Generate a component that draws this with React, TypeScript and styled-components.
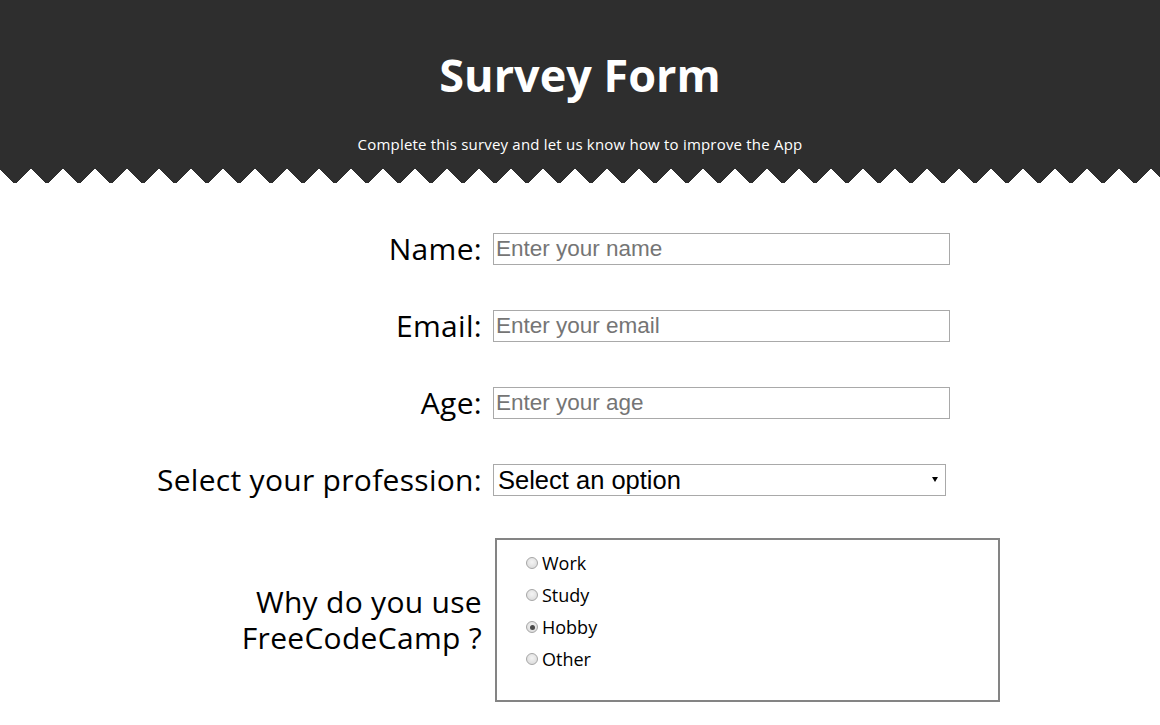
import React from "react";
import styled, { createGlobalStyle } from "styled-components";

const Global = createGlobalStyle`
  html, body { margin: 0; padding: 0; background: #fff; }
  body { font-family: "Open Sans", "DejaVu Sans", sans-serif; color: #000; }
  * { box-sizing: border-box; }
`;

const DARK = "#2e2e2e";
const LABEL_FONT = `"Open Sans", "DejaVu Sans", sans-serif`;

const Header = styled.header`
  background: ${DARK};
  height: 168px;
  display: flex;
  flex-direction: column;
  align-items: center;
  color: #fff;
  padding-top: 47px;
`;

const Title = styled.h1`
  margin: 0;
  font-family: ${LABEL_FONT};
  font-size: 45px;
  font-weight: 700;
  line-height: 56px;
`;

const Subtitle = styled.p`
  margin: 31px 0 0;
  font-family: ${LABEL_FONT};
  font-size: 15px;
  letter-spacing: 0.2px;
  line-height: 20px;
`;

const Zigzag = styled.div`
  height: 15px;
  background: conic-gradient(from -45deg at 50% 100%, ${DARK} 90deg, transparent 0) -1px 0 / 32px 16px repeat-x;
`;

const Form = styled.form`
  display: grid;
  grid-template-columns: 482px 1fr;
  column-gap: 11px;
  padding-top: 50px;
`;

const Row = styled.div`
  display: contents;
`;

const Label = styled.label<{ $mb: number }>`
  grid-column: 1;
  text-align: right;
  align-self: center;
  font-family: ${LABEL_FONT};
  font-size: 30px;
  letter-spacing: 0.3px;
  line-height: 32px;
  margin-bottom: ${(p) => p.$mb}px;
`;

const TallLabel = styled(Label)`
  line-height: 36px;
`;

const Input = styled.input<{ $mb: number }>`
  grid-column: 2;
  width: 457px;
  height: 32px;
  border: 1px solid #a9a9a9;
  padding: 0 2px;
  font-family: "Liberation Sans", Arial, sans-serif;
  font-size: 22.5px;
  margin-bottom: ${(p) => p.$mb}px;
  &::placeholder { color: #757575; }
`;

const SelectWrap = styled.div<{ $mb: number }>`
  grid-column: 2;
  position: relative;
  width: 453px;
  height: 32px;
  margin-bottom: ${(p) => p.$mb}px;
  &::after {
    content: "";
    position: absolute;
    right: 8px;
    top: 13px;
    border-left: 3px solid transparent;
    border-right: 3px solid transparent;
    border-top: 5px solid #000;
    pointer-events: none;
  }
`;

const Select = styled.select`
  appearance: none;
  width: 100%;
  height: 100%;
  border: 1px solid #a9a9a9;
  background: #fff;
  padding: 0 4px;
  font-family: "Liberation Sans", Arial, sans-serif;
  font-size: 25.5px;
  color: #000;
`;

const RadioBox = styled.div`
  grid-column: 2;
  margin-left: 2px;
  width: 505px;
  height: 164px;
  border: 2px solid #848484;
  padding: 7px 0 0 29px;
  display: flex;
  flex-direction: column;
`;

const RadioRow = styled.label`
  display: flex;
  align-items: center;
  height: 32px;
  font-family: ${LABEL_FONT};
  font-size: 18px;
`;

const Radio = styled.input.attrs({ type: "radio" })`
  appearance: none;
  margin: 0 4px 0 0;
  width: 12px;
  height: 12px;
  border-radius: 50%;
  border: 1px solid #a6a6a6;
  background: radial-gradient(circle at 50% 40%, #f4f4f4, #d6d6d6);
  display: grid;
  place-items: center;
  &:checked::after {
    content: "";
    width: 5px;
    height: 5px;
    border-radius: 50%;
    background: #4a4a4a;
  }
`;

const options = ["Work", "Study", "Hobby", "Other"];

export default function App() {
  return (
    <>
      <Global />
      <Header>
        <Title>Survey Form</Title>
        <Subtitle>Complete this survey and let us know how to improve the App</Subtitle>
      </Header>
      <Zigzag />
      <Form onSubmit={(e) => e.preventDefault()}>
        <Row>
          <Label $mb={45} htmlFor="name">Name:</Label>
          <Input $mb={45} id="name" placeholder="Enter your name" />
        </Row>
        <Row>
          <Label $mb={45} htmlFor="email">Email:</Label>
          <Input $mb={45} id="email" placeholder="Enter your email" />
        </Row>
        <Row>
          <Label $mb={45} htmlFor="age">Age:</Label>
          <Input $mb={45} id="age" placeholder="Enter your age" />
        </Row>
        <Row>
          <Label $mb={42} htmlFor="prof">Select your profession:</Label>
          <SelectWrap $mb={42}>
            <Select id="prof" defaultValue="">
              <option value="">Select an option</option>
              <option>Student</option>
              <option>Developer</option>
            </Select>
          </SelectWrap>
        </Row>
        <Row>
          <TallLabel $mb={0}>Why do you use<br />FreeCodeCamp ?</TallLabel>
          <RadioBox>
            {options.map((o) => (
              <RadioRow key={o}>
                <Radio name="why" defaultChecked={o === "Hobby"} />
                {o}
              </RadioRow>
            ))}
          </RadioBox>
        </Row>
      </Form>
    </>
  );
}
